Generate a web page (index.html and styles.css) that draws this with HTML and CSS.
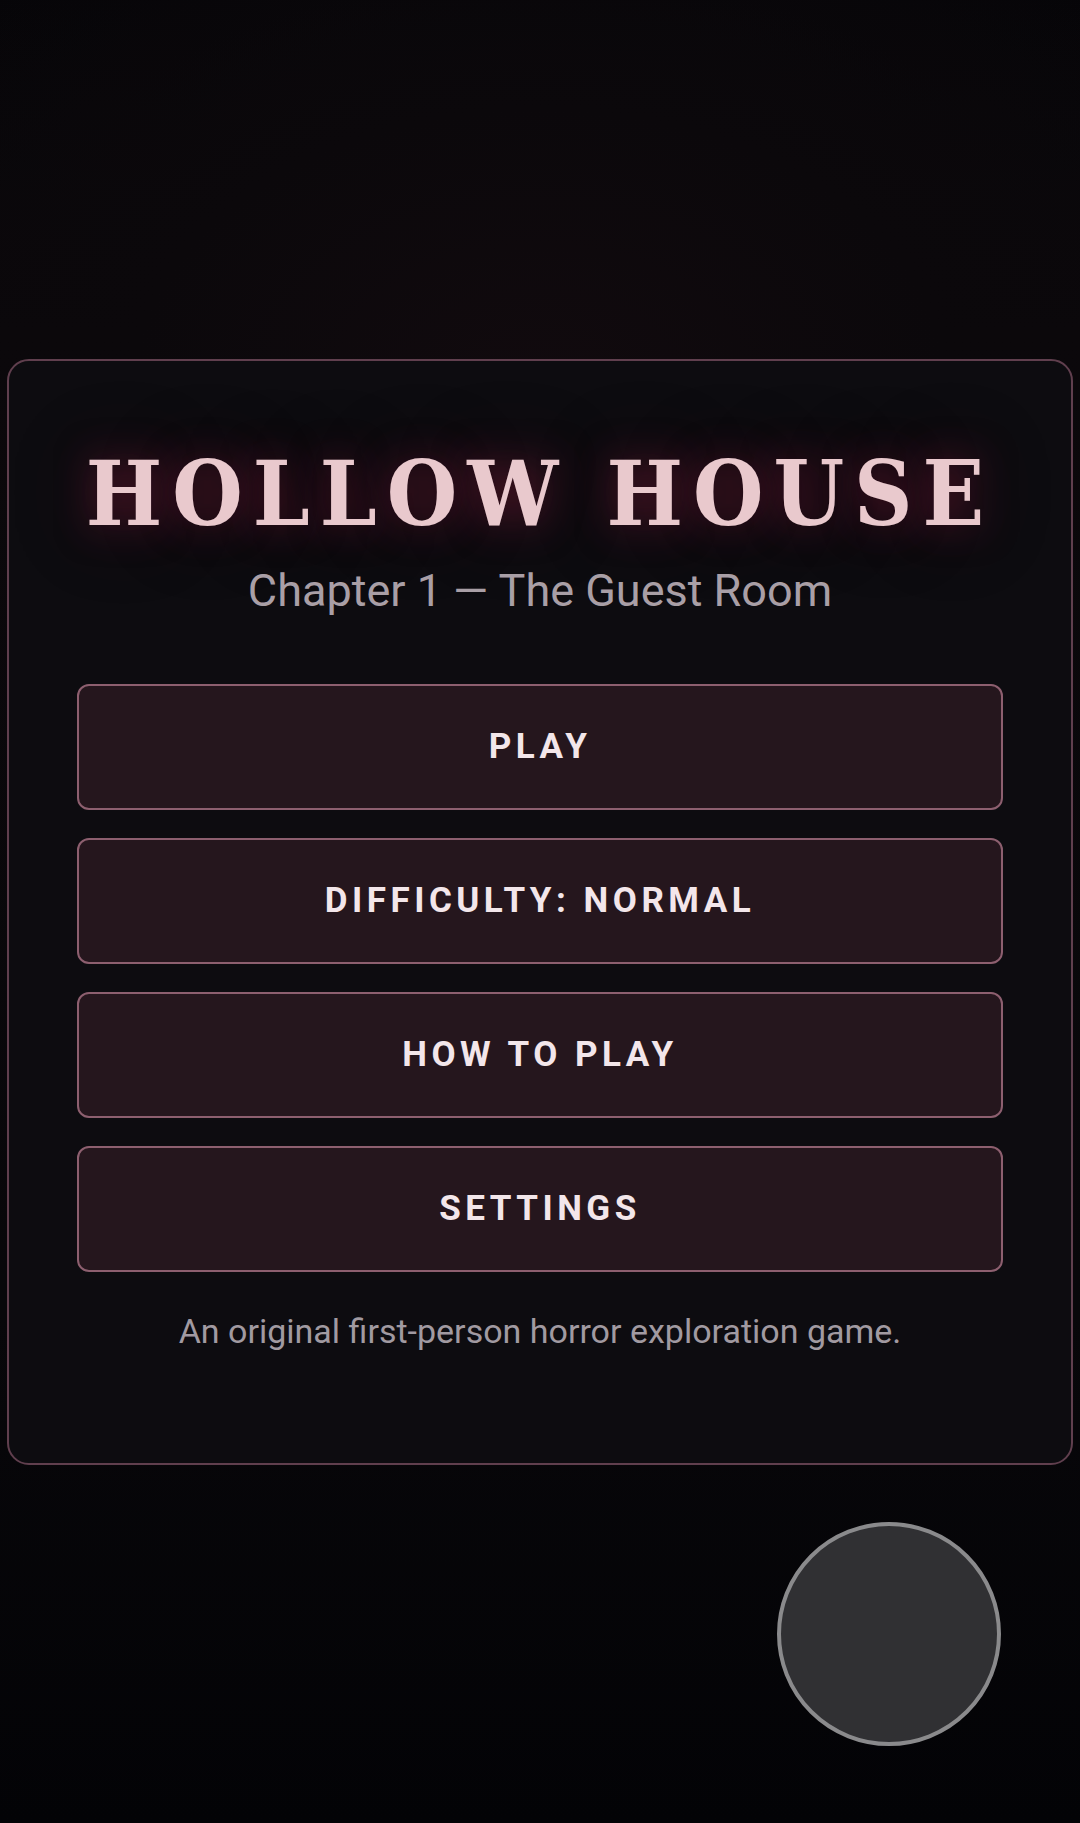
FILE: index.html
```html
<!DOCTYPE html>
<html lang="en">
<head>
<meta charset="utf-8">
<title>Hollow House</title>
<link rel="stylesheet" href="styles.css">
</head>
<body>
<main class="screen">
  <section class="menu-card">
    <h1 class="title">HOLLOW HOUSE</h1>
    <p class="subtitle">Chapter 1 — The Guest Room</p>
    <nav class="menu">
      <button class="menu-btn">PLAY</button>
      <button class="menu-btn">DIFFICULTY: NORMAL</button>
      <button class="menu-btn">HOW TO PLAY</button>
      <button class="menu-btn">SETTINGS</button>
    </nav>
    <p class="tagline">An original first-person horror exploration game.</p>
  </section>
  <div class="action-btn"></div>
</main>
</body>
</html>
```

FILE: styles.css
```css
* { box-sizing: border-box; }

html, body {
  margin: 0;
  padding: 0;
  height: 100%;
}

body {
  background: #040307;
  font-family: Roboto, "Noto Sans", sans-serif;
}

.screen {
  position: relative;
  height: 1823px;
  display: flex;
  align-items: center;
  justify-content: center;
  padding: 0 7px;
  background:
    radial-gradient(ellipse 75% 30% at 50% 21%, #110a0e 0%, #0b080b 50%, rgba(6,5,8,0) 100%),
    linear-gradient(#060508 0%, #0b080b 18%, #08070a 72%, #030306 100%);
}

.menu-card {
  width: 100%;
  background: #0d0c10;
  border: 2px solid #603f4e;
  border-radius: 22px;
  padding: 82px 68px 112px;
  display: flex;
  flex-direction: column;
  align-items: stretch;
}

.title {
  margin: 0;
  font-family: "DejaVu Serif Condensed", "DejaVu Serif", serif;
  font-stretch: condensed;
  font-weight: 700;
  font-size: 90px;
  line-height: 100px;
  letter-spacing: 10px;
  white-space: nowrap;
  text-align: center;
  color: #e9c9cd;
  text-shadow: 0 0 36px rgba(135, 28, 58, 0.55), 0 0 80px rgba(100, 20, 45, 0.35);
}

.subtitle {
  margin: 22px 0 0;
  font-size: 45px;
  line-height: 52px;
  text-align: center;
  color: #a99fa6;
}

.menu {
  margin-top: 67px;
  display: flex;
  flex-direction: column;
  gap: 28px;
}

.menu-btn {
  height: 126px;
  background: #25161d;
  border: 2px solid #8d5f6f;
  border-radius: 12px;
  color: #f3e6ea;
  font-family: Roboto, "Noto Sans", sans-serif;
  font-weight: 700;
  font-size: 35px;
  letter-spacing: 4.5px;
  display: flex;
  align-items: center;
  justify-content: center;
  padding: 0;
}

.tagline {
  margin: 39px 0 0;
  font-size: 34px;
  line-height: 40px;
  text-align: center;
  color: #a19aa1;
}

.action-btn {
  position: absolute;
  left: 777px;
  top: 1522px;
  width: 224px;
  height: 224px;
  border-radius: 50%;
  background: #303033;
  border: 4px solid #8a8a8c;
}
```
